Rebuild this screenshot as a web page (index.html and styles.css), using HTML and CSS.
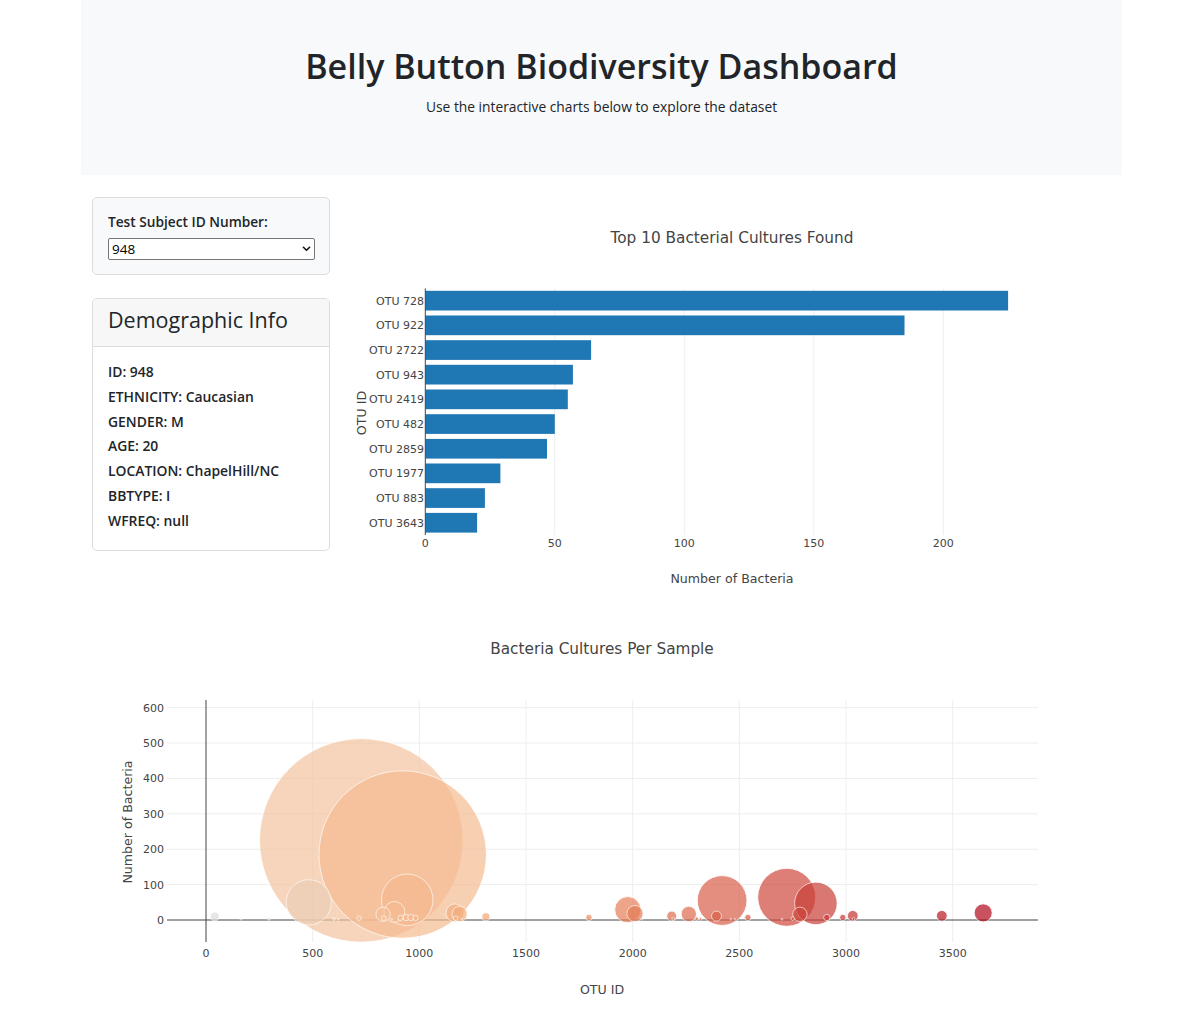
FILE: index.html
```html
<!DOCTYPE html>
<html lang="en">
<head>
<meta charset="utf-8">
<title>Belly Button Biodiversity Dashboard</title>
<link rel="stylesheet" href="styles.css">
</head>
<body>
<div class="page">
  <header class="hero">
    <h1 class="hero-title">Belly Button Biodiversity Dashboard</h1>
    <p class="hero-sub">Use the interactive charts below to explore the dataset</p>
  </header>
  <main class="content">
    <div class="top-row">
      <aside class="side">
        <div class="well">
          <label class="well-label" for="selDataset">Test Subject ID Number:</label>
          <div class="select-wrap">
            <select id="selDataset" class="select"><option>948</option></select>
            <svg class="chev" viewBox="0 0 10 7" aria-hidden="true"><path d="M1.4 1.5 L5 5 L8.6 1.5" fill="none" stroke="#111" stroke-width="1.9" stroke-linecap="round" stroke-linejoin="round"/></svg>
          </div>
        </div>
        <div class="card">
          <div class="card-head"><h3 class="card-title">Demographic Info</h3></div>
          <div class="card-body">
            <h6 class="meta">ID: 948</h6>
            <h6 class="meta">ETHNICITY: Caucasian</h6>
            <h6 class="meta">GENDER: M</h6>
            <h6 class="meta">AGE: 20</h6>
            <h6 class="meta">LOCATION: ChapelHill/NC</h6>
            <h6 class="meta">BBTYPE: I</h6>
            <h6 class="meta">WFREQ: null</h6>
          </div>
        </div>
      </aside>
      <section class="bar-wrap">
        <svg class="chart" width="759" height="400" viewBox="0 0 759 400">
          <text class="ct ttl" x="380" y="45.6" text-anchor="middle">Top 10 Bacterial Cultures Found</text>
          <g class="grid">
            <line x1="202.8" y1="91.4" x2="202.8" y2="338.1"/>
            <line x1="332.3" y1="91.4" x2="332.3" y2="338.1"/>
            <line x1="461.8" y1="91.4" x2="461.8" y2="338.1"/>
            <line x1="591.3" y1="91.4" x2="591.3" y2="338.1"/>
          </g>
          <g class="bars">
            <rect x="73.3" y="93.8" width="582.8" height="19.7"/>
            <rect x="73.3" y="118.5" width="479.2" height="19.7"/>
            <rect x="73.3" y="143.2" width="165.8" height="19.7"/>
            <rect x="73.3" y="167.8" width="147.6" height="19.7"/>
            <rect x="73.3" y="192.5" width="142.5" height="19.7"/>
            <rect x="73.3" y="217.2" width="129.5" height="19.7"/>
            <rect x="73.3" y="241.9" width="121.7" height="19.7"/>
            <rect x="73.3" y="266.5" width="75.1" height="19.7"/>
            <rect x="73.3" y="291.2" width="59.6" height="19.7"/>
            <rect x="73.3" y="315.9" width="51.8" height="19.7"/>
          </g>
          <line class="zero" x1="73.3" y1="91.4" x2="73.3" y2="338.1"/>
          <g class="ct tick" text-anchor="end">
            <text x="72" y="107.7">OTU 728</text>
            <text x="72" y="132.4">OTU 922</text>
            <text x="72" y="157">OTU 2722</text>
            <text x="72" y="181.7">OTU 943</text>
            <text x="72" y="206.4">OTU 2419</text>
            <text x="72" y="231">OTU 482</text>
            <text x="72" y="255.7">OTU 2859</text>
            <text x="72" y="280.4">OTU 1977</text>
            <text x="72" y="305.1">OTU 883</text>
            <text x="72" y="329.7">OTU 3643</text>
          </g>
          <g class="ct tick" text-anchor="middle">
            <text x="73.3" y="350">0</text>
            <text x="202.8" y="350">50</text>
            <text x="332.3" y="350">100</text>
            <text x="461.8" y="350">150</text>
            <text x="591.3" y="350">200</text>
          </g>
          <text class="ct axt" x="380" y="385.6" text-anchor="middle">Number of Bacteria</text>
          <text class="ct axt" x="0" y="0" text-anchor="middle" transform="translate(14 216) rotate(-90)">OTU ID</text>
        </svg>
      </section>
    </div>
    <section class="bubble-wrap">
      <svg class="chart" width="1019" height="415" viewBox="0 0 1019 415">
        <defs>
          <clipPath id="plotclip"><rect x="75" y="100" width="871" height="242"/></clipPath>
        </defs>
        <text class="ct ttl" x="510" y="53.6" text-anchor="middle">Bacteria Cultures Per Sample</text>
        <g class="grid">
          <line x1="220.7" y1="100" x2="220.7" y2="342"/>
          <line x1="327.3" y1="100" x2="327.3" y2="342"/>
          <line x1="434" y1="100" x2="434" y2="342"/>
          <line x1="540.7" y1="100" x2="540.7" y2="342"/>
          <line x1="647.3" y1="100" x2="647.3" y2="342"/>
          <line x1="754" y1="100" x2="754" y2="342"/>
          <line x1="860.7" y1="100" x2="860.7" y2="342"/>
          <line x1="75" y1="284.6" x2="946" y2="284.6"/>
          <line x1="75" y1="249.2" x2="946" y2="249.2"/>
          <line x1="75" y1="213.8" x2="946" y2="213.8"/>
          <line x1="75" y1="178.4" x2="946" y2="178.4"/>
          <line x1="75" y1="143" x2="946" y2="143"/>
          <line x1="75" y1="107.6" x2="946" y2="107.6"/>
        </g>
        <line class="zero" x1="114" y1="100" x2="114" y2="342"/>
        <line class="zero" x1="75" y1="320" x2="946" y2="320"/>
        <g class="bubbles" clip-path="url(#plotclip)">
          <circle cx="269.3" cy="240.4" r="101.8" fill="rgb(244,196,160)"/>
          <circle cx="310.7" cy="254.5" r="83.7" fill="rgb(245,187,145)"/>
          <circle cx="694.7" cy="297.3" r="29" fill="rgb(207,74,61)"/>
          <circle cx="315.2" cy="299.8" r="25.8" fill="rgb(245,186,144)"/>
          <circle cx="630.1" cy="300.5" r="24.9" fill="rgb(216,95,72)"/>
          <circle cx="216.8" cy="302.3" r="22.6" fill="rgb(235,205,181)"/>
          <circle cx="723.9" cy="303.4" r="21.3" fill="rgb(202,64,56)"/>
          <circle cx="535.8" cy="309.7" r="13.1" fill="rgb(230,126,87)"/>
          <circle cx="302.4" cy="311.9" r="10.4" fill="rgb(245,189,148)"/>
          <circle cx="891.2" cy="312.9" r="9.05" fill="rgb(178,10,28)"/>
          <circle cx="363" cy="312.9" r="9.05" fill="rgb(245,175,128)"/>
          <circle cx="543" cy="313.6" r="8.1" fill="rgb(229,123,86)"/>
          <circle cx="367.6" cy="314" r="7.7" fill="rgb(245,174,126)"/>
          <circle cx="596.8" cy="314" r="7.7" fill="rgb(221,106,77)"/>
          <circle cx="707.9" cy="314.3" r="7.2" fill="rgb(205,70,59)"/>
          <circle cx="291.1" cy="314.3" r="7.2" fill="rgb(245,192,152)"/>
          <circle cx="849.8" cy="315.8" r="5.4" fill="rgb(184,24,35)"/>
          <circle cx="760.8" cy="315.8" r="5.4" fill="rgb(197,52,50)"/>
          <circle cx="579.7" cy="316.1" r="5" fill="rgb(223,111,80)"/>
          <circle cx="624.5" cy="316.1" r="5" fill="rgb(217,97,73)"/>
          <circle cx="122.7" cy="316.5" r="4.5" fill="rgb(220,220,220)"/>
          <circle cx="393.9" cy="316.8" r="4.1" fill="rgb(245,168,117)"/>
          <circle cx="496.9" cy="317.5" r="3.2" fill="rgb(235,138,94)"/>
          <circle cx="655.9" cy="317.5" r="3.2" fill="rgb(212,87,67)"/>
          <circle cx="734.8" cy="317.5" r="3.2" fill="rgb(201,61,54)"/>
          <circle cx="750.8" cy="317.5" r="3.2" fill="rgb(198,56,51)"/>
          <circle cx="314.1" cy="317.5" r="3.2" fill="rgb(245,186,144)"/>
          <circle cx="318.8" cy="317.5" r="3.2" fill="rgb(245,185,143)"/>
          <circle cx="308.6" cy="317.9" r="2.7" fill="rgb(245,188,146)"/>
          <circle cx="323.5" cy="317.9" r="2.7" fill="rgb(245,184,141)"/>
          <circle cx="267" cy="318.2" r="2.3" fill="rgb(243,196,161)"/>
          <circle cx="291.7" cy="318.2" r="2.3" fill="rgb(245,192,152)"/>
          <circle cx="363.6" cy="318.2" r="2.3" fill="rgb(245,175,128)"/>
          <circle cx="700.7" cy="318.6" r="1.8" fill="rgb(206,72,60)"/>
          <circle cx="604.7" cy="318.6" r="1.8" fill="rgb(220,103,76)"/>
          <circle cx="176.9" cy="318.9" r="1.4" fill="rgb(229,211,198)"/>
          <circle cx="242" cy="318.9" r="1.4" fill="rgb(239,201,171)"/>
          <circle cx="608.5" cy="318.9" r="1.4" fill="rgb(219,102,75)"/>
          <circle cx="761.5" cy="318.9" r="1.4" fill="rgb(197,52,50)"/>
          <circle cx="581.2" cy="318.9" r="1.4" fill="rgb(223,111,80)"/>
          <circle cx="149" cy="319.3" r="0.9" fill="rgb(224,216,209)"/>
          <circle cx="246.3" cy="319.3" r="0.9" fill="rgb(239,201,170)"/>
          <circle cx="299.6" cy="319.3" r="0.9" fill="rgb(245,190,149)"/>
          <circle cx="549.8" cy="319.3" r="0.9" fill="rgb(228,121,85)"/>
          <circle cx="638.8" cy="319.3" r="0.9" fill="rgb(215,92,70)"/>
          <circle cx="643.1" cy="319.3" r="0.9" fill="rgb(214,91,69)"/>
          <circle cx="690" cy="319.3" r="0.9" fill="rgb(207,75,62)"/>
          <circle cx="370" cy="319.3" r="0.9" fill="rgb(245,173,125)"/>
        </g>
        <g class="ct tick" text-anchor="end">
          <text x="72" y="324">0</text>
          <text x="72" y="288.6">100</text>
          <text x="72" y="253.2">200</text>
          <text x="72" y="217.8">300</text>
          <text x="72" y="182.4">400</text>
          <text x="72" y="147">500</text>
          <text x="72" y="111.6">600</text>
        </g>
        <g class="ct tick" text-anchor="middle">
          <text x="114" y="357">0</text>
          <text x="220.7" y="357">500</text>
          <text x="327.3" y="357">1000</text>
          <text x="434" y="357">1500</text>
          <text x="540.7" y="357">2000</text>
          <text x="647.3" y="357">2500</text>
          <text x="754" y="357">3000</text>
          <text x="860.7" y="357">3500</text>
        </g>
        <text class="ct axt" x="510" y="393.6" text-anchor="middle">OTU ID</text>
        <text class="ct axt" x="0" y="0" text-anchor="middle" transform="translate(39.7 222) rotate(-90)">Number of Bacteria</text>
      </svg>
    </section>
  </main>
</div>
</body>
</html>
```

FILE: styles.css
```css
* { box-sizing: border-box; }

body {
  margin: 0;
  background: #fff;
  color: #212529;
  font-family: "Open Sans", "Noto Sans", "Liberation Sans", sans-serif;
}

.page {
  width: 1041px;
  margin-left: 81px;
}

.hero {
  height: 175px;
  background: #f8f9fa;
  text-align: center;
  padding-top: 43.5px;
}

.hero-title {
  margin: 0;
  font-size: 34px;
  line-height: 44px;
  font-weight: 600;
  color: #212529;
}

.hero-sub {
  margin: 9.8px 0 0;
  font-size: 13.8px;
  line-height: 20px;
  color: #212529;
}

.content {
  padding: 0 11px;
}

.top-row {
  display: flex;
  gap: 22px;
  margin-top: 22px;
  align-items: flex-start;
}

.side {
  width: 238px;
  flex: none;
}

.well {
  height: 78px;
  background: #f8f9fa;
  border: 1px solid #dcdcdc;
  border-radius: 5px;
  padding: 14px 14px 13px 15px;
}

.well-label {
  display: block;
  font-size: 13.7px;
  font-weight: 600;
  line-height: 20px;
  margin-bottom: 6px;
}

.select-wrap {
  position: relative;
  width: 207px;
  height: 22px;
}

.select {
  -webkit-appearance: none;
  appearance: none;
  display: block;
  width: 207px;
  height: 22px;
  margin: 0;
  padding: 0 0 0 3px;
  border: 1px solid #767676;
  border-radius: 2px;
  background: #fff;
  color: #000;
  font-family: "Open Sans", "Noto Sans", sans-serif;
  font-size: 13.5px;
}

.chev {
  position: absolute;
  right: 4px;
  top: 8px;
  width: 9px;
  height: 6px;
  pointer-events: none;
}

.card {
  margin-top: 23px;
  border: 1px solid #dcdcdc;
  border-radius: 5px;
  background: #fff;
  overflow: hidden;
}

.card-head {
  background: #f7f7f7;
  border-bottom: 1px solid #dcdcdc;
  padding: 7px 15px 12px;
}

.card-title {
  margin: 0;
  font-size: 21.5px;
  line-height: 28px;
  font-weight: 500;
}

.card-body {
  padding: 13px 15px 16px;
}

.meta {
  margin: 0;
  font-size: 13.9px;
  line-height: 24.8px;
  font-weight: 600;
}

.bar-wrap {
  width: 759px;
  flex: none;
}

.chart {
  display: block;
}

.bubble-wrap {
  margin-top: 3px;
}

.ct {
  font-family: "DejaVu Sans", Verdana, sans-serif;
  fill: #444;
}

.ttl { font-size: 15.3px; }
.tick { font-size: 11px; }
.axt { font-size: 12.6px; }

.grid line {
  stroke: #eee;
  stroke-width: 1;
}

.zero {
  stroke: #444;
  stroke-width: 1;
}

.bars rect {
  fill: #1f77b4;
}

.bubbles circle {
  opacity: 0.7;
  stroke: #fff;
  stroke-width: 0.9;
}
```
